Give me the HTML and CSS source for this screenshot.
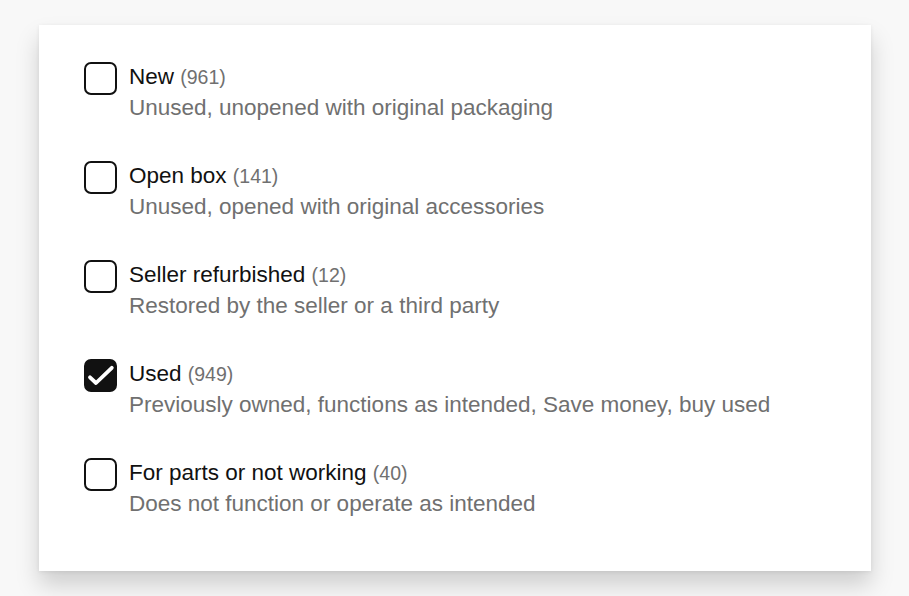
FILE: index.html
```html
<!DOCTYPE html>
<html>
<head>
<meta charset="utf-8">
<link rel="stylesheet" href="styles.css">
</head>
<body>
<div class="card">
  <ul class="list">
    <li class="item">
      <span class="box"></span>
      <div class="text">
        <div class="title">New <span class="count">(961)</span></div>
        <div class="desc">Unused, unopened with original packaging</div>
      </div>
    </li>
    <li class="item">
      <span class="box"></span>
      <div class="text">
        <div class="title">Open box <span class="count">(141)</span></div>
        <div class="desc">Unused, opened with original accessories</div>
      </div>
    </li>
    <li class="item">
      <span class="box"></span>
      <div class="text">
        <div class="title">Seller refurbished <span class="count">(12)</span></div>
        <div class="desc">Restored by the seller or a third party</div>
      </div>
    </li>
    <li class="item">
      <span class="box checked"><svg class="check" width="33" height="33" viewBox="0 0 33 33"><path d="M6 18.3 L12 24 L27.8 8.8" fill="none" stroke="#fff" stroke-width="3.8" stroke-linecap="round" stroke-linejoin="round"/></svg></span>
      <div class="text">
        <div class="title">Used <span class="count">(949)</span></div>
        <div class="desc">Previously owned, functions as intended, Save money, buy used</div>
      </div>
    </li>
    <li class="item">
      <span class="box"></span>
      <div class="text">
        <div class="title">For parts or not working <span class="count">(40)</span></div>
        <div class="desc">Does not function or operate as intended</div>
      </div>
    </li>
  </ul>
</div>
</body>
</html>
```
FILE: styles.css
```css
html, body {
  margin: 0;
  padding: 0;
  background: #f8f8f8;
  font-family: "Liberation Sans", Arial, sans-serif;
}
body {
  padding: 25px 38px 40px 39px;
}
.card {
  background: #fff;
  width: 832px;
  box-sizing: border-box;
  padding: 36px 45px 52px;
  box-shadow: 0 14px 22px rgba(0, 0, 0, 0.17), 0 1px 4px rgba(0, 0, 0, 0.07);
}
.list {
  list-style: none;
  margin: 0;
  padding: 0;
  display: flex;
  flex-direction: column;
  gap: 37px;
}
.item {
  display: flex;
  align-items: flex-start;
  gap: 12px;
}
.box {
  position: relative;
  width: 33px;
  height: 33px;
  box-sizing: border-box;
  border: 2px solid #111;
  border-radius: 7px;
  flex: none;
  margin-top: 0.5px;
}
.box.checked {
  background: #111;
}
.check {
  position: absolute;
  left: -2px;
  top: -2px;
}
.title {
  font-size: 22.5px;
  line-height: 31px;
  height: 31px;
  color: #111;
}
.count {
  font-size: 19.5px;
  line-height: 1;
  color: #707070;
}
.desc {
  font-size: 22.5px;
  line-height: 31px;
  color: #707070;
}
```
